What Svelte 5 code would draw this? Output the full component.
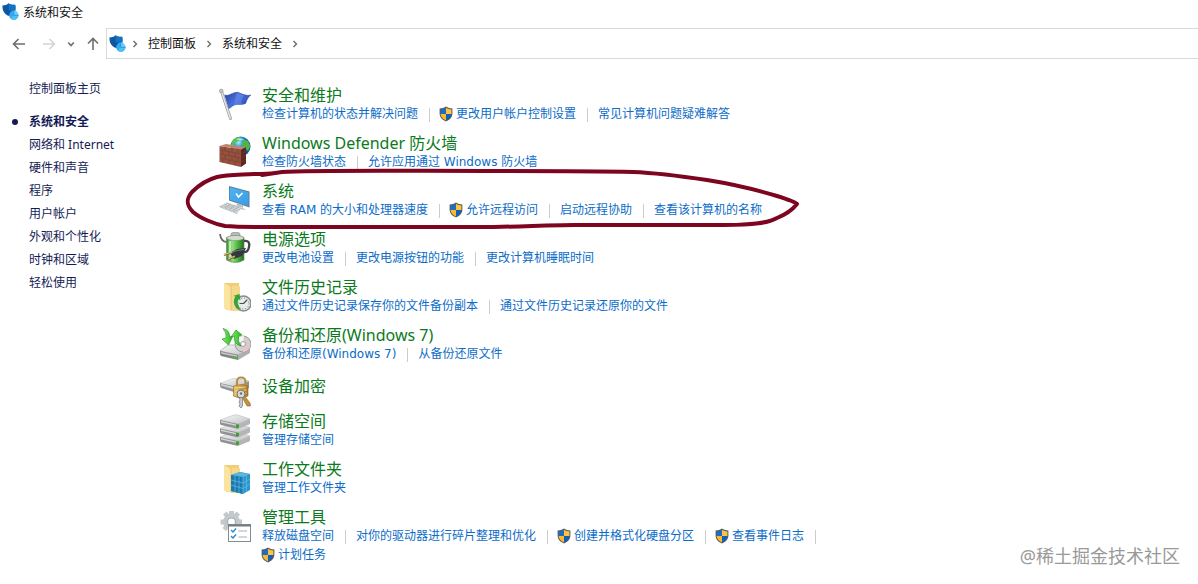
<script>
  const crumbs = ['控制面板', '系统和安全'];

  const sections = ['系统和安全', '网络和 Internet', '硬件和声音', '程序', '用户帐户', '外观和个性化', '时钟和区域', '轻松使用'];
  const current = '系统和安全';

  const categories = [
    {
      icon: 'flag',
      title: '安全和维护',
      links: [
        { text: '检查计算机的状态并解决问题' },
        { text: '更改用户帐户控制设置', admin: true },
        { text: '常见计算机问题疑难解答' }
      ]
    },
    {
      icon: 'firewall',
      title: 'Windows Defender 防火墙',
      links: [{ text: '检查防火墙状态' }, { text: '允许应用通过 Windows 防火墙' }]
    },
    {
      icon: 'system',
      title: '系统',
      links: [
        { text: '查看 RAM 的大小和处理器速度' },
        { text: '允许远程访问', admin: true },
        { text: '启动远程协助' },
        { text: '查看该计算机的名称' }
      ]
    },
    {
      icon: 'power',
      title: '电源选项',
      links: [{ text: '更改电池设置' }, { text: '更改电源按钮的功能' }, { text: '更改计算机睡眠时间' }]
    },
    {
      icon: 'history',
      title: '文件历史记录',
      links: [{ text: '通过文件历史记录保存你的文件备份副本' }, { text: '通过文件历史记录还原你的文件' }]
    },
    {
      icon: 'backup',
      title: '备份和还原(Windows 7)',
      links: [{ text: '备份和还原(Windows 7)' }, { text: '从备份还原文件' }]
    },
    { icon: 'encryption', title: '设备加密', links: [] },
    { icon: 'storage', title: '存储空间', links: [{ text: '管理存储空间' }] },
    { icon: 'workfolders', title: '工作文件夹', links: [{ text: '管理工作文件夹' }] },
    {
      icon: 'tools',
      title: '管理工具',
      links: [
        { text: '释放磁盘空间' },
        { text: '对你的驱动器进行碎片整理和优化' },
        { text: '创建并格式化硬盘分区', admin: true },
        { text: '查看事件日志', admin: true },
        { text: '计划任务', admin: true }
      ]
    }
  ];
</script>

{#snippet securityIcon()}
  <svg class="security" viewBox="0 0 18 18" aria-hidden="true">
    <path d="M.4 2.600C3 2.600 5 1.600 6.500.3C8.500 1.500 10.500 2 13.200 1.800C14.200 5.500 13.500 9.500 11 13.500C8.500 13.500 6 13 4 11.500C1.500 9.500.2 6.500.4 2.600Z" fill="url(#gSecurity)" />
    <path d="M6.500.3C8.500 1.500 10.500 2 13.200 1.800C13.800 4 13.700 6 13.200 8L6.800 7.500Z" fill="#1a7fd0" opacity=".7" />
    <circle cx="11.800" cy="12.200" r="4.600" fill="#35aaf0" />
    <path d="M11.800 12.200V7.600A4.600 4.600 0 0 1 16.400 12.200Z" fill="#6fd0fa" />
    <path d="M11.800 12.200H16.400A4.600 4.600 0 0 1 8.500 15.400Z" fill="#4fc0f6" />
    <path d="M11.800 7.600V12.200H16.400" fill="none" stroke="#1d86d6" stroke-width=".7" />
  </svg>
{/snippet}

{#snippet chevron()}
  <svg class="chevron" viewBox="0 0 8 8" aria-hidden="true"><path d="M2.500 1L5.500 4L2.500 7" /></svg>
{/snippet}

{#snippet shield()}
  <svg class="shield" viewBox="0 0 14 16" aria-hidden="true">
    <path d="M7 .6C8.800 1.900 11 2.600 13.400 2.600V7.500C13.400 11.200 11 13.900 7 15.500C3 13.900.6 11.200.6 7.500V2.600C3 2.600 5.200 1.900 7 .6Z" fill="#5b5d5c" />
    <path d="M7 1.800V8H1.600V3.500C3.800 3.400 5.500 2.800 7 1.800Z" fill="#1a6fc4" />
    <path d="M7 1.800V8H12.400V3.500C10.200 3.400 8.500 2.800 7 1.800Z" fill="#fdc341" />
    <path d="M7 8V14.400C3.800 12.900 1.800 10.800 1.600 8Z" fill="#fdb92c" />
    <path d="M7 8V14.400C10.200 12.900 12.200 10.800 12.400 8Z" fill="#1161b8" />
  </svg>
{/snippet}

{#snippet drive(y)}
  <path d="M1 {y + 5}L15 {y}Q17 {y - .5} 19 {y}L31 {y + 4}L19 {y + 9}Z" fill="url(#gMetal)" stroke="#b3b3b3" stroke-width=".5" />
  <path d="M1 {y + 5}L19 {y + 9}V{y + 14}L2 {y + 10}Q1 {y + 9.500} 1 {y + 8}Z" fill="#8f9193" />
  <path d="M2 {y + 6}L18 {y + 9.800}V{y + 11}L2 {y + 7.500}Z" fill="#d3d5d6" />
  <path d="M19 {y + 9}L31 {y + 4}V{y + 8}Q31 {y + 9} 30 {y + 9.500}L19 {y + 14}Z" fill="#b3b5b7" />
  <path d="M17 {y + 9.500}L20 {y + 9.500}V{y + 12.800}L17 {y + 12.500}Z" fill="#36a52c" />
{/snippet}

{#snippet folder()}
  <path d="M5 4Q5 3 6 3H20V30H8L5 28Z" fill="#f0cd78" />
  <path d="M5 3L12 7V31L5 28Z" fill="#fbe3a0" />
  <path d="M12 6H20Q21 6 21 7V31H12Z" fill="#f5d88c" />
  <path d="M12 6V30" stroke="#dfb765" stroke-width=".7" />
{/snippet}

{#snippet categoryIcon(name)}
  <svg class="icon" viewBox="0 0 32 32" aria-hidden="true">
    {#if name === 'flag'}
      <path d="M5.500 7C10 9 14 3.500 19 4.500C23 5.800 27 8.500 32 7C29 9.500 28 12 27 15.500C23 18 18 15.500 15 17.500C12.500 19 11 20.500 9.500 21Z" fill="url(#gFlag)" />
      <path d="M18 4.500C16 9 17 12 14 18C17 15.500 20 15.500 23 16.500C21.500 12 24 10 25 7C22 6.500 20 4.500 18 4.500Z" fill="#6a8fec" opacity=".55" />
      <path d="M5.500 7C10 9 14 3.500 19 4.500C23 5.800 27 8.500 32 7" fill="none" stroke="#2643a5" stroke-width=".7" />
      <path d="M2.500 3.500L11.500 30.500" stroke="#959595" stroke-width="2.800" stroke-linecap="round" />
      <path d="M2.500 3.500L11.500 30.500" stroke="#e4e4e4" stroke-width="1.500" stroke-linecap="round" />
      <circle cx="2.300" cy="3" r="1.900" fill="#c2c2c2" stroke="#8b8b8b" stroke-width=".5" />
    {:else if name === 'firewall'}
      <circle cx="21.500" cy="10.500" r="10" fill="url(#gGlobe)" />
      <path d="M13 6C15 2 19 .8 22 1.500L20 5L16 6L15 10H12Z" fill="#5ec344" />
      <path d="M24 3L29 5L31.500 10L29 15L25 12L22.500 9Z" fill="#4fb548" />
      <path d="M17 3Q21 1.500 25 3Q22 6 17 3Z" fill="#eaffff" opacity=".6" />
      <path d="M.5 10L22 13.500V31L.5 26Z" fill="#97523f" />
      <path d="M22 13.500L27 11V27.500L22 31Z" fill="#5b281f" />
      <path d="M.5 10L7 8L27 11L22 13.500Z" fill="#bd8670" />
      <path d="M1 14L22 17.800M1 18L22 22M1 22L22 26.500M6 11V15M13 12V16M19 13V17M3.500 15V18M10 16V20M16 17V21M6 19V23M13 20V24M19 21V26M4 23V27M10 24V28M16 25V29M22 18L27 15M22 22L27 19M22 26.500L27 23" stroke="#784032" stroke-width=".7" fill="none" />
    {:else if name === 'system'}
      <path d="M10 2L30.500 7.500V23.500L10 16.500Z" fill="#5b7f98" />
      <path d="M10.800 3.200L29.500 8.200V22L10.800 15.800Z" fill="url(#gScreen)" />
      <path d="M17 9.500L19.500 13L23.500 9" fill="none" stroke="#fff" stroke-width="1.600" />
      <path d="M18 19L24 21V24L27 26L20 25L17 23Z" fill="#b9bfc3" />
      <path d="M1 22L8 18.500L24 23.500L18 28.500Z" fill="#dde0e1" />
      <path d="M1 22L18 28.500V29.500L1 23ZM5 20L21 26M3 21L19.500 27.200M7 19L22.500 24.600M6 24L12 19.800M10 25.500L16 21M14 27L20 22.200" fill="none" stroke="#a2a9ad" stroke-width=".7" />
    {:else if name === 'power'}
      <path d="M1 2Q2 10 8 10" fill="none" stroke="#666" stroke-width="1.800" />
      <rect x="12" y=".5" width="9" height="5" rx="2" fill="#b6bab9" stroke="#777" stroke-width=".5" />
      <path d="M7.500 5.500Q16.500 1.500 25 5.500V28Q16.500 33 7.500 28Z" fill="url(#gBattery)" stroke="#6d886b" stroke-width=".7" />
      <ellipse cx="16.300" cy="6" rx="8.500" ry="2.500" fill="#d3decf" stroke="#7f907e" stroke-width=".6" />
      <path d="M11 9V27" stroke="#d9ffd0" stroke-width="2.500" opacity=".7" />
      <path d="M25 9Q31.500 8 30 15Q29 21 24 20" fill="none" stroke="#41464b" stroke-width="2.300" />
      <path d="M11 21L18 17L27 16L23 24L15 27Z" fill="#34383c" />
      <path d="M12 21L18 18.500L25 17.500" stroke="#777d82" stroke-width="1" fill="none" />
      <path d="M5 23L13 20.500M9 27.500L16 24.500" stroke="#8d6d30" stroke-width="2.200" />
      <path d="M5 22.500L13 20M9 27L16 24" stroke="#f6dfa0" stroke-width=".8" />
    {:else if name === 'history'}
      {@render folder()}
      <circle cx="24.500" cy="23.500" r="7.500" fill="#e8ebeb" stroke="#858d8c" stroke-width="1.500" />
      <circle cx="24.500" cy="23.500" r="5.500" fill="none" stroke="#697170" stroke-width="1" stroke-dasharray="1 1.880" />
      <path d="M24.500 23.500L28 20M24.500 23.500H20.500" stroke="#464c4c" stroke-width="1.200" />
      <path d="M16.500 16.500Q12.500 22 17.500 28.500L22 29.500Q17 24 19.500 19L21.500 20L20.500 14L14 16Z" fill="#32a538" />
    {:else if name === 'backup'}
      <path d="M1 23L9 17H22L31 21L19 27Z" fill="url(#gMetal)" stroke="#999" stroke-width=".6" />
      <path d="M1 23L19 27V32L2 28Q1 27 1 26Z" fill="#808284" />
      <path d="M19 27L31 21V25L19 32Z" fill="#adafb1" />
      <path d="M2 24L18 27.500V29L2 25.500Z" fill="#c9cbcc" />
      <path d="M14 28L18 29V31L14 30Z" fill="#47bc31" />
      <circle cx="24" cy="16" r="8" fill="#cfcfcf" stroke="#8c8c8c" stroke-width=".8" />
      <path d="M24 16L17 12Q20 7.500 25 8Z" fill="#f6f6f6" />
      <path d="M24 16L31.500 18Q29 24 24 24Z" fill="#e8c3c9" />
      <circle cx="24" cy="16" r="2.400" fill="#fff" stroke="#8c8c8c" stroke-width=".8" />
      <path d="M4 .5Q11 2 10.500 9L14 8L9.500 17L3 11L7 10Q8 5 4 .5Z" fill="url(#gArrow)" stroke="#168d20" stroke-width=".6" />
      <path d="M22 18Q14 16 15.500 8L12 9L17 2L23 7L19.500 8Q18.500 14 22 18Z" fill="url(#gArrow)" stroke="#168d20" stroke-width=".6" />
    {:else if name === 'encryption'}
      <path d="M1 7L15 2L30 5V12L18 17L2 12Q1 11 1 9Z" fill="#929496" />
      <path d="M1 7L15 2L30 5L18 11Z" fill="url(#gMetal)" />
      <path d="M2 8L18 12V14L2 9.500Z" fill="#d5d7d8" />
      <path d="M18 11V6Q18 1.500 22 1.500Q26.500 1.500 26.500 6V11" fill="none" stroke="#b59047" stroke-width="2.200" />
      <path d="M14.500 10L22 8.500L29 10V20L21.500 22.500L14.500 20Z" fill="url(#gLock)" stroke="#9c762d" stroke-width=".7" />
      <path d="M16 12L27 11M16 15L27.500 14M16 18L27.500 17" stroke="#fae5a6" stroke-width=".8" />
      <path d="M24 18L31 27L31.500 30H28L23 21Z" fill="#c39439" stroke="#80601f" stroke-width=".6" />
      <circle cx="22" cy="18" r="4" fill="#d8dadb" stroke="#707375" />
      <circle cx="22" cy="17.500" r="1.200" fill="#6c6f71" />
      <path d="M20.500 21.500H23.500V30L22 32L20 30L21 28L20 26L21 24Z" fill="#c9cbcc" stroke="#707375" stroke-width=".7" />
    {:else if name === 'storage'}
      {@render drive(18)}
      {@render drive(9.5)}
      {@render drive(1)}
    {:else if name === 'workfolders'}
      {@render folder()}
      <path d="M12 13L21 10L31 12V28L24 32L12 29Z" fill="#2b95cc" />
      <path d="M12 13L24 15V32L12 29Z" fill="#1a78b2" />
      <path d="M12 13L21 10L31 12L24 15Z" fill="#55b3dc" />
      <path d="M12 18L24 21L31 17M12 23L24 26.500L31 22M16 14V30M20 14.500V31M27.500 13.500V30M24 15V32M16 11.700L27.500 13.500" stroke="#68bde2" stroke-width=".7" fill="none" />
    {:else if name === 'tools'}
      <g fill="#c3c8ca">
        <circle cx="12.500" cy="12" r="8.500" />
        <path d="M10 1H15V22H10ZM1.500 9.500H23V14.500H1.500ZM4 4.500L7.500 1.500L21.500 17.500L18 21ZM17.500 1.500L21 4.500L7 21L3.500 18Z" />
      </g>
      <circle cx="12.500" cy="12" r="4" fill="#fff" stroke="#a4abae" stroke-width="1.200" />
      <rect x="9.500" y="14.500" width="22" height="17" fill="#fff" stroke="#858b8f" />
      <path d="M9 15.500H32" stroke="#747b80" stroke-width="2" />
      <path d="M12 20L14 22L17 18.500M12 26L14 28L17 24.500" stroke="#2887d2" stroke-width="1.400" fill="none" />
      <path d="M19.500 21H28M19.500 27H28" stroke="#a3aeb5" />
    {/if}
  </svg>
{/snippet}

<svg class="defs" aria-hidden="true">
  <defs>
    <linearGradient id="gSecurity" x2="1" y2="1"><stop stop-color="#0f5ea8" /><stop offset="1" stop-color="#0c4d98" /></linearGradient>
    <linearGradient id="gFlag" x2="1" y2=".6"><stop stop-color="#2440a8" /><stop offset=".5" stop-color="#4a6fd8" /><stop offset="1" stop-color="#2b4cb8" /></linearGradient>
    <radialGradient id="gGlobe" cx=".4" cy=".3"><stop stop-color="#a6ecff" /><stop offset=".5" stop-color="#2597df" /><stop offset="1" stop-color="#08539d" /></radialGradient>
    <linearGradient id="gScreen" x2="1" y2="1"><stop stop-color="#4bb4f2" /><stop offset="1" stop-color="#3c9ce6" /></linearGradient>
    <linearGradient id="gBattery"><stop stop-color="#348f2c" /><stop offset=".35" stop-color="#8fdc7e" /><stop offset=".65" stop-color="#4bb441" /><stop offset="1" stop-color="#216e20" /></linearGradient>
    <linearGradient id="gMetal" x2="1" y2="1"><stop stop-color="#f8f8f8" /><stop offset="1" stop-color="#c0c2c4" /></linearGradient>
    <linearGradient id="gArrow" x2="1"><stop stop-color="#8fec66" /><stop offset="1" stop-color="#20b51f" /></linearGradient>
    <linearGradient id="gLock"><stop stop-color="#e9c15c" /><stop offset=".5" stop-color="#d2a03d" /><stop offset="1" stop-color="#a67622" /></linearGradient>
  </defs>
</svg>

<div class="window">
  <header class="titlebar">
    {@render securityIcon()}
    <span>系统和安全</span>
  </header>

  <nav class="toolbar" aria-label="导航">
    <div class="history">
      <button class="step" aria-label="后退"><svg viewBox="0 0 14 14"><path d="M13 7H1.500M6.500 2L1.500 7L6.500 12" /></svg></button>
      <button class="step" aria-label="前进" disabled><svg viewBox="0 0 14 14"><path d="M1 7H12.500M7.500 2L12.500 7L7.500 12" /></svg></button>
      <button class="recent" aria-label="最近浏览的位置"><svg viewBox="0 0 8 14"><path d="M1.200 5.500L4 8.500L6.800 5.500" /></svg></button>
      <button class="step" aria-label="上移"><svg viewBox="0 0 14 14"><path d="M7 13V1.500M2 6.500L7 1.500L12 6.500" /></svg></button>
    </div>
    <div class="address">
      {@render securityIcon()}
      {@render chevron()}
      {#each crumbs as crumb}
        <a href="#top">{crumb}</a>
        {@render chevron()}
      {/each}
    </div>
  </nav>

  <div class="body">
    <aside>
      <a class="home" href="#home">控制面板主页</a>
      <ul>
        {#each sections as section}
          <li class:current={section === current}><a href="#section">{section}</a></li>
        {/each}
      </ul>
    </aside>

    <main>
      {#each categories as category}
        <section class="category">
          {@render categoryIcon(category.icon)}
          <div class="detail" class:single={!category.links.length}>
            <h2><a href="#category">{category.title}</a></h2>
            {#if category.links.length}
              <ul class="links">
                {#each category.links as link}
                  <li>
                    <a href="#task">{#if link.admin}{@render shield()}{/if}{link.text}</a>
                  </li>
                {/each}
              </ul>
            {/if}
          </div>
        </section>
      {/each}
    </main>
  </div>

  <svg class="annotation" viewBox="0 0 624 68" aria-hidden="true">
    <path d="M91 12C84 13 77 13 70 13C52 14 42 14 33 16C22 19 14 25 8 31C2 38 2 44 9 51C16 57 30 63 41 65C54 66 70 66 84 66H310C350 65 370 64 390 64H540C570 64 584 62 593 57C603 53 609 48 613 43Q612 41 593 35C570 28 548 23 523 19C503 16 475 12 449 11C410 10 350 10 306 10C220 10 130 9 98 11L78 14" />
  </svg>
  <div class="watermark">@稀土掘金技术社区</div>
</div>

<style>
  :global(body) {
    margin: 0;
    background: #fff;
  }

  .window {
    position: relative;
    min-height: 100vh;
    overflow: hidden;
    color: #111;
    font: 12px/19px 'Noto Sans', 'Noto Sans CJK SC', sans-serif;
  }

  .defs {
    position: absolute;
    width: 0;
    height: 0;
  }

  ul {
    margin: 0;
    padding: 0;
    list-style: none;
  }

  a {
    color: inherit;
    text-decoration: none;
  }

  svg {
    flex: none;
  }

  .titlebar {
    display: flex;
    align-items: center;
    gap: 3px;
    height: 24px;
    padding-left: 2px;
  }

  .security {
    width: 18px;
    height: 18px;
  }

  .toolbar {
    display: flex;
    align-items: center;
    padding-top: 4px;
  }

  .history {
    display: flex;
    align-items: center;
    box-sizing: border-box;
    width: 106px;
    padding-left: 12px;
  }

  button {
    display: flex;
    justify-content: center;
    padding: 0;
    border: 0;
    background: none;
  }

  button svg {
    width: 14px;
    height: 14px;
    fill: none;
    stroke: #6e6e6e;
    stroke-width: 1.6;
  }

  button:disabled svg {
    stroke: #d4d4d4;
  }

  .step {
    width: 14px;
  }

  .step:disabled {
    margin-left: 16px;
  }

  .recent {
    width: 30px;
  }

  .recent svg {
    width: 8px;
    height: 14px;
  }

  .address {
    display: flex;
    flex: 1;
    align-items: center;
    gap: 9px;
    height: 29px;
    padding-left: 2px;
    border: 1px solid #d9d9d9;
    border-right: 0;
  }

  .address .security {
    margin-right: -5px;
  }

  .chevron {
    width: 8px;
    height: 8px;
    fill: none;
    stroke: #666;
    stroke-width: 1.3;
  }

  .body {
    display: flex;
    padding-top: 18px;
  }

  aside {
    flex: none;
    box-sizing: border-box;
    width: 219px;
    padding-left: 29px;
    color: #151c55;
    line-height: 23px;
  }

  .home {
    display: block;
    margin-bottom: 10px;
  }

  .current {
    position: relative;
    font-weight: 700;
  }

  .current::before {
    position: absolute;
    top: 9px;
    left: -17px;
    width: 6px;
    height: 6px;
    border-radius: 50%;
    background: #151c55;
    content: '';
  }

  main {
    display: flex;
    flex: 1;
    flex-direction: column;
    gap: 3px;
    padding-top: 8px;
  }

  .category {
    display: flex;
    gap: 11px;
  }

  .icon {
    width: 32px;
    height: 32px;
    margin-top: 3px;
  }

  .single {
    padding-top: 3px;
  }

  h2 {
    margin: 0;
    color: #0b7a1c;
    font-size: 16px;
    font-weight: 400;
    line-height: 20px;
  }

  .links {
    display: flex;
    flex-wrap: wrap;
    max-width: 600px;
    padding-bottom: 6px;
    color: #0b6cc8;
    font-family: 'DejaVu Sans', 'Noto Sans CJK SC', sans-serif;
  }

  .links li {
    display: flex;
    align-items: center;
    height: 19px;
  }

  .links li:not(:last-child)::after {
    width: 1px;
    height: 14px;
    margin: 0 10px 0 11px;
    background: #ccc;
    content: '';
  }

  .links a {
    display: flex;
    align-items: center;
  }

  .shield {
    width: 14px;
    height: 16px;
    margin: 0 3px 1px -1px;
  }

  .annotation {
    position: absolute;
    top: 161px;
    left: 184px;
    width: 624px;
    height: 68px;
    fill: none;
    stroke: #7d0520;
    stroke-width: 4;
    stroke-linecap: round;
    stroke-linejoin: round;
    pointer-events: none;
  }

  .watermark {
    position: absolute;
    right: 18px;
    bottom: 16px;
    color: #999;
    font-size: 18px;
    line-height: 24px;
  }
</style>
